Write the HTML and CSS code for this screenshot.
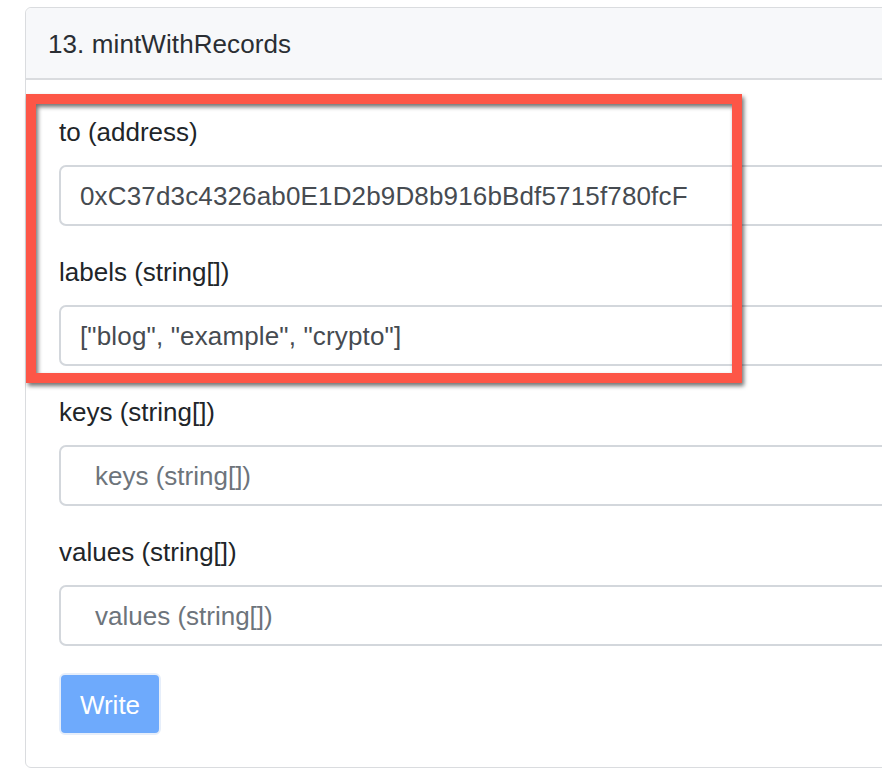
FILE: index.html
```html
<!DOCTYPE html>
<html>
<head>
<meta charset="utf-8">
<link rel="stylesheet" href="styles.css">
</head>
<body>
<div class="viewport">
  <div class="card">
    <div class="card-header">13. mintWithRecords</div>
    <div class="card-body">
      <div class="form-group">
        <label class="label">to (address)</label>
        <div class="input">0xC37d3c4326ab0E1D2b9D8b916bBdf5715f780fcF</div>
      </div>
      <div class="form-group">
        <label class="label">labels (string[])</label>
        <div class="input">["blog", "example", "crypto"]</div>
      </div>
      <div class="form-group">
        <label class="label">keys (string[])</label>
        <div class="input placeholder">keys (string[])</div>
      </div>
      <div class="form-group">
        <label class="label">values (string[])</label>
        <div class="input placeholder">values (string[])</div>
      </div>
      <button class="btn">Write</button>
    </div>
    <div class="highlight"></div>
  </div>
</div>
</body>
</html>
```

FILE: styles.css
```css
html, body {
  margin: 0;
  padding: 0;
  background: #fff;
}
body {
  font-family: "Liberation Sans", Arial, Helvetica, sans-serif;
  font-size: 26px;
  line-height: 39px;
  color: #212529;
}
.viewport {
  width: 882px;
  height: 768px;
  overflow: hidden;
  padding: 7px 0 0 25px;
  box-sizing: border-box;
}
.card {
  position: relative;
  width: 960px;
  height: 761px;
  box-sizing: border-box;
  border: 1px solid #dadcdf;
  border-radius: 6px;
}
.card-header {
  background: #f7f8fa;
  border-bottom: 2px solid #dadcdf;
  border-radius: 6px 6px 0 0;
  padding: 17px 22px 14px;
  color: #2a2e33;
  letter-spacing: 0.1px;
}
.card-body {
  padding: 33px 33px 0;
}
.form-group {
  margin-bottom: 27px;
}
.label {
  display: block;
  margin-bottom: 13px;
}
.input {
  height: 61px;
  box-sizing: border-box;
  border: 2px solid #d3d7dc;
  border-radius: 7px;
  padding: 10px 19px 8px;
  color: #464b51;
  white-space: nowrap;
  letter-spacing: 0.15px;
}
.input.placeholder {
  padding-left: 34px;
  color: #6d747b;
  letter-spacing: 0;
}
.btn {
  display: block;
  margin-top: 3px;
  width: 102px;
  height: 62px;
  box-sizing: border-box;
  background: #6eaafc;
  border: 2px solid #e6eefa;
  border-radius: 6px;
  color: #fff;
  font-family: inherit;
  font-size: 26px;
  padding: 2px 0 0;
}
.highlight {
  position: absolute;
  left: 0;
  top: 86px;
  width: 716px;
  height: 289px;
  box-sizing: border-box;
  border: 10px solid #fd5647;
  filter: drop-shadow(2px 3px 2px rgba(0, 0, 0, 0.55));
}
```
